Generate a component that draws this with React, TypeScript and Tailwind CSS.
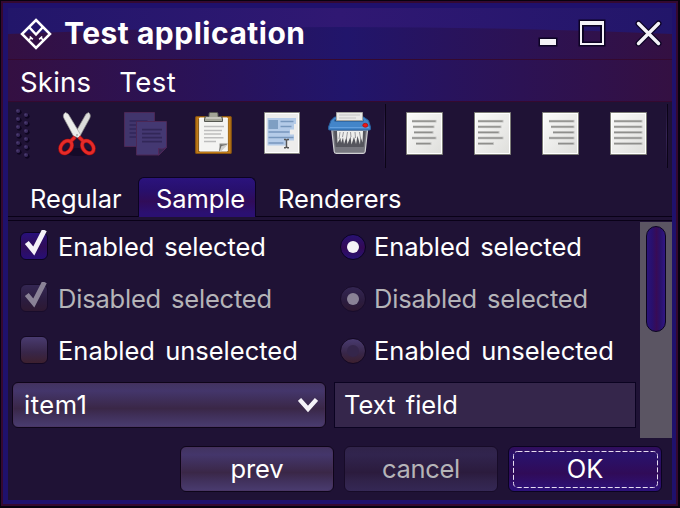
import React from "react";
import type { ReactNode } from "react";

function Glyph({ x, children }: { x: number; children: ReactNode }) {
  return (
    <svg className="h-[68px] w-[68px] shrink-0" viewBox={`${x} 102 68 68`}>
      {children}
    </svg>
  );
}

function Separator() {
  return <div className="mt-0.5 h-[64px] w-[2px] shrink-0 border-r border-[#0b0416] bg-[linear-gradient(#1f1235,#362455,#1f1235)]" />;
}

function Grip() {
  const dots: number[][] = [];
  for (let i = 0; i < 6; i++) {
    dots.push([18, 111 + i * 8]);
    if (i < 5) dots.push([26, 115 + i * 8]);
  }
  dots.push([26, 155]);
  return (
    <svg className="h-[68px] w-[35px] shrink-0" viewBox="8 102 35 68">
      {dots.map(([x, y]) => (
        <g key={`${x}-${y}`}>
          <circle cx={x + 1.2} cy={y + 1.3} r="2.4" fill="#0d051f" />
          <circle cx={x} cy={y} r="2.1" fill="#392a5b" />
          <circle cx={x - 0.6} cy={y - 0.4} r="1" fill="#4a3b70" />
        </g>
      ))}
    </svg>
  );
}

function Scissors() {
  return (
    <Glyph x={43}>
      <ellipse cx="78" cy="152" rx="14" ry="4" fill="#150a28" />
      <path d="M88.500 112.500c2.200 1.500 2.200 4 1.100 6L79.500 137l-4.900-3L86 114Z" fill="#dcdcda" stroke="#8b8b88" strokeWidth=".7" />
      <path d="M65.500 112.500c-2.500 1.500-2.500 4-1.400 6L73.500 136l5.500 2 1.500-3.500L68.200 114Z" fill="#ececea" stroke="#a0a09d" strokeWidth=".7" />
      <g fill="none" stroke="#a50e0e" strokeWidth="4.200">
        <ellipse cx="66.100" cy="147" rx="5" ry="6.900" transform="rotate(38 66.100 147)" />
        <ellipse cx="87.900" cy="147" rx="5" ry="6.900" transform="rotate(-38 87.900 147)" />
        <path d="m71 141 4-4M83 141l-4-4" />
      </g>
      <g fill="none" stroke="#e62b29" strokeWidth="2.900">
        <ellipse cx="66.100" cy="147" rx="5" ry="6.900" transform="rotate(38 66.100 147)" />
        <ellipse cx="87.900" cy="147" rx="5" ry="6.900" transform="rotate(-38 87.900 147)" />
        <path d="m71 141 4-4M83 141l-4-4" />
      </g>
      <circle cx="77" cy="135" r="1" fill="#aaa" />
    </Glyph>
  );
}

function Copy() {
  return (
    <Glyph x={111}>
      <path d="M124.500 112.500h30v34h-30z" fill="#41356c" stroke="#4b2755" />
      <path d="M129.500 121h18M129.500 125h16M129.500 129h18M129.500 133h12M129.500 137h14" stroke="#30265a" strokeWidth="1.600" />
      <path d="M136.500 121.500h30v26l-7.500 7.500h-22.500z" fill="#443872" stroke="#4b2755" />
      <path d="M142 129.700h20M142 133.700h18.500M142 137.700h20M142 141.700h20" stroke="#322758" strokeWidth="1.700" />
      <path d="M158.500 155v-6.500q4 1.500 8-1z" fill="#352750" stroke="#50275b" />
    </Glyph>
  );
}

function Paste() {
  return (
    <Glyph x={179}>
      <rect x="195.700" y="116.500" width="35.500" height="37" rx="1" fill="#c27c18" stroke="#8a5410" strokeWidth="1.200" />
      <path d="M198 119h30.500v33H198z" fill="#765626" opacity=".7" />
      <path d="M199.700 118h27.600v33H199.700z" fill="#f4f4f2" stroke="#fff" />
      <path d="M204 126.500h20M204 130.500h18M204 134h17M204 137.800h19.500M204 141.500h12" stroke="#bdbdbd" strokeWidth="1.500" />
      <path d="M219.500 151.500v-8h8.300z" fill="#8b8b88" />
      <path d="m219 151.500 1.500-7q3 1.500 7.300-.7z" fill="#686866" />
      <path d="m219.500 151.500 2-5.500 6.300-1.500-6.800 7z" fill="#cfcfcc" />
      <path d="M204.500 121.500v-3q0-2 2-2h2.500v-2.700q0-1.300 1.500-1.300h6q1.500 0 1.500 1.300v2.700h2.500q2 0 2 2v3z" fill="#a3a598" stroke="#555750" />
      <path d="M206 118h15" stroke="#d0d1c8" strokeWidth="1.500" />
    </Glyph>
  );
}

function SelectText() {
  return (
    <Glyph x={247}>
      <path d="M264.500 112.500h35v41h-35z" fill="#ededec" stroke="#898984" />
      <path d="M265.500 113.500h33v39h-33z" fill="none" stroke="#fff" />
      <path d="M267.500 118h28.500v6h-2v5.500h-4v5h4v6h-8v5h-18.500z" fill="#b4cbe8" />
      <path d="M268.500 120h9.500v9h-9.500z" fill="#7f9fc3" />
      <path d="M280.500 121.500h13M280.500 126.500h11M268.500 132h21M268.500 137.500h25M268.500 143h15" stroke="#7797bd" strokeWidth="1.700" />
      <path d="M284 139.500h1.500l1 1 1-1h1.500M286.500 140.500v6M284 147.700h1.500l1-1 1 1h1.500" fill="none" stroke="#555" strokeWidth="1.400" />
    </Glyph>
  );
}

function Shredder() {
  return (
    <Glyph x={315}>
      <path d="M331.800 130h35.700l-2.300 21.500q-.2 1.800-2 1.800h-27q-1.800 0-2-1.800z" fill="#77777f" stroke="#cfcfd2" strokeWidth="1.200" />
      <path d="M334 131h31.500l-1.800 16h-28z" fill="#55555d" />
      <path d="M337 131h26l-.5 11.500-2-6-.5 8-2.500-8.500-1.500 8-2-7-2.500 7.500-1-8-3 7.500-1-7-2.500 7-1-6.500-2 5.500-.5-5-3 5z" fill="#eeeeec" />
      <path d="m340 132-1 7m4.500-7-1 5m5-5-1 6m4-6 .5 5m4-5 .5 6m4-6 1 6" fill="none" stroke="#8e8e94" strokeWidth=".9" />
      <path d="M334.500 117h29l5 3.500 2 6.500v2q0 1-1 1h-40q-1 0-1-1v-2l2.500-6.500z" fill="#4385c9" stroke="#285f9d" />
      <path d="M330 127.500h39" stroke="#629fde" />
      <path d="M334.500 120.500h29" stroke="#214d82" strokeWidth="2" />
      <path d="M336.500 112.500h26v8h-26z" fill="#e9e9e8" stroke="#a4a4a0" />
      <path d="M339 115h21M339 118h17" stroke="#c3c3c3" />
      <ellipse cx="365.300" cy="125.300" rx="2.500" ry="2" fill="#ee1715" stroke="#a80c0c" strokeWidth=".7" />
    </Glyph>
  );
}

function TextPage({ x, lines }: { x: number; lines: number[][] }) {
  return (
    <svg className="h-[68px] w-[68px] shrink-0" viewBox="0 102 68 68">
      <defs>
        <linearGradient id={`page${x}`} x1="0" y1="0" x2="1" y2="1">
          <stop offset="0" stopColor="#fbfbfa" />
          <stop offset="1" stopColor="#dededb" />
        </linearGradient>
      </defs>
      <path d="M16.500 112.500h36v42h-36z" fill={`url(#page${x})`} stroke="#7d7d77" />
      <path d="M17.500 113.500h34v40h-34z" fill="none" stroke="#fff" />
      {lines.map(([from, to], i) => (
        <g key={i}>
          <path d={`M${from} ${121.2 + i * 5.6}H${to}`} stroke="#c2c2c0" strokeWidth="2.600" />
          <path d={`M${from} ${121.2 + i * 5.6}H${to - 1}`} stroke="#8f8f8c" strokeWidth="1.300" />
        </g>
      ))}
    </svg>
  );
}

function Tick() {
  return (
    <svg className="absolute -top-[2px] left-[4px] h-[27px] w-[24px]" viewBox="0 0 24 27">
      <path d="m2.800 12.500 7 8.500L20.500 0" fill="none" stroke="#f4f2f7" strokeWidth="5" />
    </svg>
  );
}

type State = "on" | "disabled" | "off";

const labels: Record<State, string> = {
  on: "Enabled selected",
  disabled: "Disabled selected",
  off: "Enabled unselected",
};

const labelStyles: Record<State, string> = {
  on: "",
  disabled: "tracking-[-0.2px] text-[#b5b4b8]",
  off: "tracking-[0px]",
};

function CheckBox({ state }: { state: State }) {
  const fill =
    state === "on"
      ? "border-[#0b0321] bg-[linear-gradient(#28107b,#300d58_52%,#270e76)]"
      : "border-[#130822] bg-[linear-gradient(#493b70,#382648_60%,#3d202f)]";
  return (
    <label className="flex h-[52px] items-center">
      <span className={`relative mb-[2px] h-7 w-7 shrink-0 ${state === "disabled" ? "opacity-50" : ""}`}>
        <span className={`block h-7 w-7 rounded-[6px] border ${fill}`} />
        {state !== "off" && <Tick />}
      </span>
      <span className={`ml-[10px] ${labelStyles[state]}`}>{labels[state]}</span>
    </label>
  );
}

function Radio({ state }: { state: State }) {
  const fill =
    state === "on"
      ? "border-[#0b0321] bg-[linear-gradient(#281273,#330955_52%,#271274)]"
      : "border-[#130822] bg-[linear-gradient(#493b70,#382648_60%,#3d202f)]";
  return (
    <label className="flex h-[52px] items-center">
      <span className={`flex h-[26px] w-[26px] shrink-0 items-center justify-center rounded-full border ${fill} ${state === "disabled" ? "opacity-50" : ""}`}>
        <span className={`h-3 w-3 rounded-full ${state === "off" ? "bg-[#35264b]" : "bg-[#f4f2f7]"}`} />
      </span>
      <span className={`ml-[8px] ${labelStyles[state]}`}>{labels[state]}</span>
    </label>
  );
}

function TitleBar() {
  return (
    <header className="relative h-[94px] bg-[linear-gradient(90deg,#341042,#28135d_35%,#21156b_51%,#28135d_66%,#341042)]">
      <svg className="absolute inset-0 h-[94px] w-full" viewBox="0 0 664 94">
        <defs>
          <linearGradient id="gloss">
            <stop stopColor="#22166a" />
            <stop offset=".5" stopColor="#301873" />
            <stop offset="1" stopColor="#22166a" />
          </linearGradient>
        </defs>
        <path d="M0 0h664v26Q332 12 0 26z" fill="url(#gloss)" />
      </svg>
      <div className="relative flex h-[52px] items-center border-b border-[#35092f] pl-3 pr-[10px]">
        <svg className="h-8 w-8" viewBox="20 18 32 32" fill="none" stroke="#fff" strokeWidth="2.500">
          <path d="m36 20 14 14-14 14-14-14z" />
          <path d="m29 27 7 7.500 7-7.500" />
          <path d="m28.500 40.500 2.800-3m-1.500-1 3 2.800M43.500 40.500l-2.800-3m1.500-1-3 2.800" strokeWidth="1.700" />
        </svg>
        <h1 className="ml-[12px] pb-[2px] text-[30px] font-bold tracking-[0.5px] [word-spacing:0px]">Test application</h1>
        <svg className="ml-auto h-9 w-[126px]" viewBox="536 17 126 36" fill="none">
          <path d="M538.500 38.500h19v9h-19z" fill="#0c0324" />
          <path d="M540 40h16v6h-16z" fill="#f4f2f7" />
          <path fillRule="evenodd" d="M578.500 20.500h27v27h-27zM584 27.500V42.500h16v-15z" fill="#0c0324" />
          <path fillRule="evenodd" d="M580 22h24v24h-24zM582 26v18h20V26z" fill="#f4f2f7" />
          <path d="m638.500 24.500 20 20m0-20-20 20" stroke="#0c0324" strokeWidth="6" strokeLinecap="round" />
          <path d="m638.500 24.500 20 20m0-20-20 20" stroke="#f4f2f7" strokeWidth="3.400" strokeLinecap="round" />
        </svg>
      </div>
      <nav className="relative flex h-[42px] items-center gap-[28px] border-b border-[#35092f] pl-[12px] pt-[5px] text-[27.500px] tracking-[0.2px]">
        <span>Skins</span>
        <span className="tracking-[0.5px]">Test</span>
      </nav>
    </header>
  );
}

const plainButton =
  "bg-[linear-gradient(#423360,#44366b_18%,#3a2747_58%,#40305a_75%,#4a3c70)] border-[#0e0519] shadow-[inset_0_0_0_1px_#4a2c5766]";

export default function App() {
  return (
    <div className="h-[508px] w-[680px] overflow-hidden border-b-2 border-l border-r-2 border-t border-[#07020f] bg-[#07020f] font-['Inter',sans-serif] text-[25.500px] leading-none tracking-[-0.12px] [word-spacing:3px] text-white">
      <div className="h-[505px] border-2 border-[#350930]">
        <div className="h-[501px] border-b-4 border-l-[5px] border-r-4 border-t-[5px] border-[#1f116c] bg-[#1f1235]">
          <TitleBar />
          <div className="flex h-[68px]">
            <Grip />
            <Scissors />
            <Copy />
            <Paste />
            <SelectText />
            <Shredder />
            <div className="ml-px mr-1"><Separator /></div>
            <TextPage x={1} lines={[[22, 46.5], [23, 44.5], [24, 43.5], [22, 46.5], [26, 41.5]]} />
            <TextPage x={2} lines={[[20, 45.5], [20, 43.5], [20, 41.5], [20, 45.5], [20, 36]]} />
            <TextPage x={3} lines={[[23, 48.5], [25, 48.5], [27, 48.5], [23, 48.5], [32, 48.5]]} />
            <TextPage x={4} lines={[[20, 48.5], [20, 48.5], [20, 48.5], [20, 48.5], [20, 48.5]]} />
            <div className="ml-1"><Separator /></div>
          </div>

          <div className="flex h-[47px] items-end border-b border-[#090117]">
            <span className="flex h-[39px] w-[130px] items-center pl-[22px] pt-[5px] tracking-[0px]">Regular</span>
            <span className="-mb-px flex h-[40px] w-[118px] items-center justify-center rounded-t-[6px] border border-b-0 border-[#0b0321] bg-[linear-gradient(#2b137d,#28106e_30%,#300c59_60%,#2b1072_90%)] pl-[7px] pt-[3px]">Sample</span>
            <span className="flex h-[39px] items-center pl-[22px] pt-[5px] tracking-[0px]">Renderers</span>
          </div>
          <div className="mt-[3px] flex h-[218px] border-t border-[#090117]">
            <div className="w-[632px]">
              <div className="grid grid-cols-[320px_1fr] pl-3">
                <div>
                  <CheckBox state="on" />
                  <CheckBox state="disabled" />
                  <CheckBox state="off" />
                </div>
                <div>
                  <Radio state="on" />
                  <Radio state="disabled" />
                  <Radio state="off" />
                </div>
              </div>
              <div className="flex pl-1 pt-[5px]">
                <div className={`flex h-[46px] w-[314px] items-center justify-between rounded-[6px] border pl-[11px] pr-[7px] ${plainButton}`}>
                  <span className="tracking-[0.5px]">item1</span>
                  <svg className="h-5 w-5" viewBox="0 0 20 20">
                    <path d="m1.500 4.500 8.500 9.500 8.500-9.500" fill="none" stroke="#f4f2f7" strokeWidth="4.400" />
                  </svg>
                </div>
                <div className="ml-2 flex h-[46px] w-[302px] items-center border border-[#0b0321] bg-[#35264b] pl-[9px] tracking-[0px]">Text field</div>
              </div>
            </div>
            <div className="mt-px h-[216px] w-8 bg-[#5b5563] pl-[6px] pt-[4px]">
              <div className="h-[106px] w-5 rounded-full border border-[#0b0321] bg-[linear-gradient(90deg,#2b147b,#28106e_28%,#380b56_53%,#29116b_75%,#301585)]" />
            </div>
          </div>
          <footer className="flex justify-end gap-[10px] pr-[10px] pt-[8px]">
            <div className={`flex h-[46px] w-[154px] items-center justify-center rounded-[6px] border ${plainButton}`}>prev</div>
            <div className="flex h-[46px] w-[154px] items-center justify-center rounded-[6px] border border-[#170b28] bg-[linear-gradient(#302349,#31244e_18%,#2b1b3d_58%,#302249_75%,#352855)] tracking-[-0.3px] text-[#b5b4b8]">cancel</div>
            <div className="relative flex h-[46px] w-[154px] items-center justify-center rounded-[6px] border border-[#0b0321] bg-[linear-gradient(#310d5b,#29126c_18%,#300b58_60%,#2d127b)]">
              <span>OK</span>
              <svg className="absolute inset-0 h-11 w-[152px]" viewBox="0 0 152 44">
                <rect x="4.500" y="4.500" width="144" height="36" rx="4" fill="none" stroke="#e6dcf0" strokeDasharray="5 2" />
              </svg>
            </div>
          </footer>
        </div>
      </div>
    </div>
  );
}
